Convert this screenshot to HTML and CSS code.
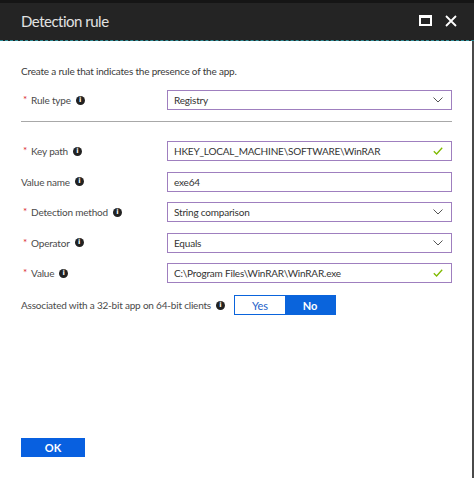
FILE: index.html
```html
<!DOCTYPE html>
<html>
<head>
<meta charset="utf-8">
<link rel="stylesheet" href="styles.css">
</head>
<body>
<div class="blade">
  <div class="header">
    <div class="title">Detection rule</div>
    <div class="controls">
      <span class="max"></span>
      <svg class="close" width="12" height="12" viewBox="0 0 12 12"><path d="M1 1L11 11M11 1L1 11" stroke="#fff" stroke-width="1.8"/></svg>
    </div>
  </div>
  <div class="content">
    <div class="intro">Create a rule that indicates the presence of the app.</div>
    <div class="row">
      <div class="label"><span class="req">*</span>Rule type<span class="info">i</span></div>
      <div class="box"><span>Registry</span><svg class="chev" width="10" height="6" viewBox="0 0 10 6"><path d="M0.5 0.5L5 5L9.5 0.5" fill="none" stroke="#555" stroke-width="1"/></svg></div>
    </div>
    <div class="sep"></div>
    <div class="rows">
      <div class="row">
        <div class="label"><span class="req">*</span>Key path<span class="info">i</span></div>
        <div class="box"><span>HKEY_LOCAL_MACHINE\SOFTWARE\WinRAR</span><svg class="check" width="10" height="8" viewBox="0 0 10 8"><path d="M0.8 4.2L3.6 7L9.2 0.8" fill="none" stroke="#7fba00" stroke-width="1.3"/></svg></div>
      </div>
      <div class="row">
        <div class="label">Value name<span class="info">i</span></div>
        <div class="box"><span>exe64</span></div>
      </div>
      <div class="row">
        <div class="label"><span class="req">*</span>Detection method<span class="info">i</span></div>
        <div class="box"><span>String comparison</span><svg class="chev" width="10" height="6" viewBox="0 0 10 6"><path d="M0.5 0.5L5 5L9.5 0.5" fill="none" stroke="#555" stroke-width="1"/></svg></div>
      </div>
      <div class="row">
        <div class="label"><span class="req">*</span>Operator<span class="info">i</span></div>
        <div class="box"><span>Equals</span><svg class="chev" width="10" height="6" viewBox="0 0 10 6"><path d="M0.5 0.5L5 5L9.5 0.5" fill="none" stroke="#555" stroke-width="1"/></svg></div>
      </div>
      <div class="row">
        <div class="label"><span class="req">*</span>Value<span class="info">i</span></div>
        <div class="box"><span>C:\Program Files\WinRAR\WinRAR.exe</span><svg class="check" width="10" height="8" viewBox="0 0 10 8"><path d="M0.8 4.2L3.6 7L9.2 0.8" fill="none" stroke="#7fba00" stroke-width="1.3"/></svg></div>
      </div>
    </div>
    <div class="assoc">
      <div class="alabel">Associated with a 32-bit app on 64-bit clients<span class="info">i</span></div>
      <div class="toggle"><span class="opt yes">Yes</span><span class="opt no">No</span></div>
    </div>
    <div class="spacer"></div>
    <div class="footer"><button class="ok">OK</button></div>
  </div>
</div>
</body>
</html>
```

FILE: styles.css
```css
html, body {
  margin: 0;
  padding: 0;
  background: #fff;
}
body {
  font-family: "Lato", "Open Sans", sans-serif;
  color: #333;
}
.blade {
  width: 474px;
  height: 478px;
  display: flex;
  flex-direction: column;
  overflow: hidden;
}
.header {
  height: 37px;
  background: #242424;
  border-top: 3px solid #151515;
  border-bottom: 1px dashed #2c8c96;
  display: flex;
  align-items: center;
  justify-content: space-between;
  padding: 0 17px 0 21px;
  box-sizing: content-box;
}
.title {
  color: #e2e2e2;
  font-size: 15px;
  font-family: "Lato", sans-serif;
  letter-spacing: -0.5px;
  margin-top: -2px;
}
.controls {
  display: flex;
  align-items: center;
  gap: 13px;
  margin-top: -2px;
}
.max {
  width: 9px;
  height: 6px;
  border: 2px solid #fff;
  border-top-width: 3px;
  display: block;
}
.close { display: block; }
.content {
  flex: 1;
  display: flex;
  flex-direction: column;
  padding: 0 20px 0 21px;
  border-right: 2px solid #4a4a4a;
  font-size: 10px;
  letter-spacing: -0.2px;
}
.intro {
  margin-top: 23px;
  line-height: 14px;
  height: 14px;
  margin-bottom: 12px;
  color: #3a3a3a;
}
.row {
  display: flex;
  align-items: center;
  height: 20px;
}
.label {
  width: 146px;
  flex: none;
  display: flex;
  align-items: center;
  color: #4a4a4a;
  white-space: nowrap;
}
.req {
  color: #d9272e;
  margin: 0 4px 0 2px;
  font-size: 10px;
  position: relative;
  top: -1px;
}
.info {
  display: inline-flex;
  align-items: center;
  justify-content: center;
  width: 9px;
  height: 9px;
  border-radius: 50%;
  background: #222;
  color: #fff;
  font-size: 7px;
  font-weight: bold;
  font-family: "DejaVu Sans", sans-serif;
  letter-spacing: 0;
  margin-left: 5px;
  line-height: 1;
}
.box {
  flex: 1;
  height: 20px;
  box-sizing: border-box;
  border: 1px solid #9f7fbf;
  display: flex;
  align-items: center;
  justify-content: space-between;
  padding: 0 7px 0 6px;
  color: #333;
  white-space: nowrap;
}
.chev { margin-right: 1px; }
.check { margin-right: 1px; }
.sep {
  height: 1px;
  background: #a8a8a8;
  margin: 11px 0 19px 0;
}
.rows {
  display: flex;
  flex-direction: column;
  gap: 10.5px;
}
.assoc {
  display: flex;
  align-items: center;
  margin-top: 12px;
  height: 20px;
}
.alabel {
  display: flex;
  align-items: center;
  width: 213px;
  flex: none;
  color: #4a4a4a;
  white-space: nowrap;
}
.toggle {
  display: flex;
  height: 20px;
  width: 102px;
  box-sizing: border-box;
  border: 1px solid #0a64dc;
}
.opt {
  flex: 1;
  display: flex;
  align-items: center;
  justify-content: center;
  font-size: 11px;
  letter-spacing: 0;
}
.yes { background: #fff; color: #1e5fc8; }
.no { background: #0a64dc; color: #fff; font-weight: bold; }
.spacer { flex: 1; }
.footer {
  margin-bottom: 21px;
}
.ok {
  width: 64px;
  height: 19px;
  background: #0860e0;
  border: none;
  color: #fff;
  font-family: "Lato", sans-serif;
  font-weight: bold;
  font-size: 11px;
  padding: 0;
  display: block;
}
```
